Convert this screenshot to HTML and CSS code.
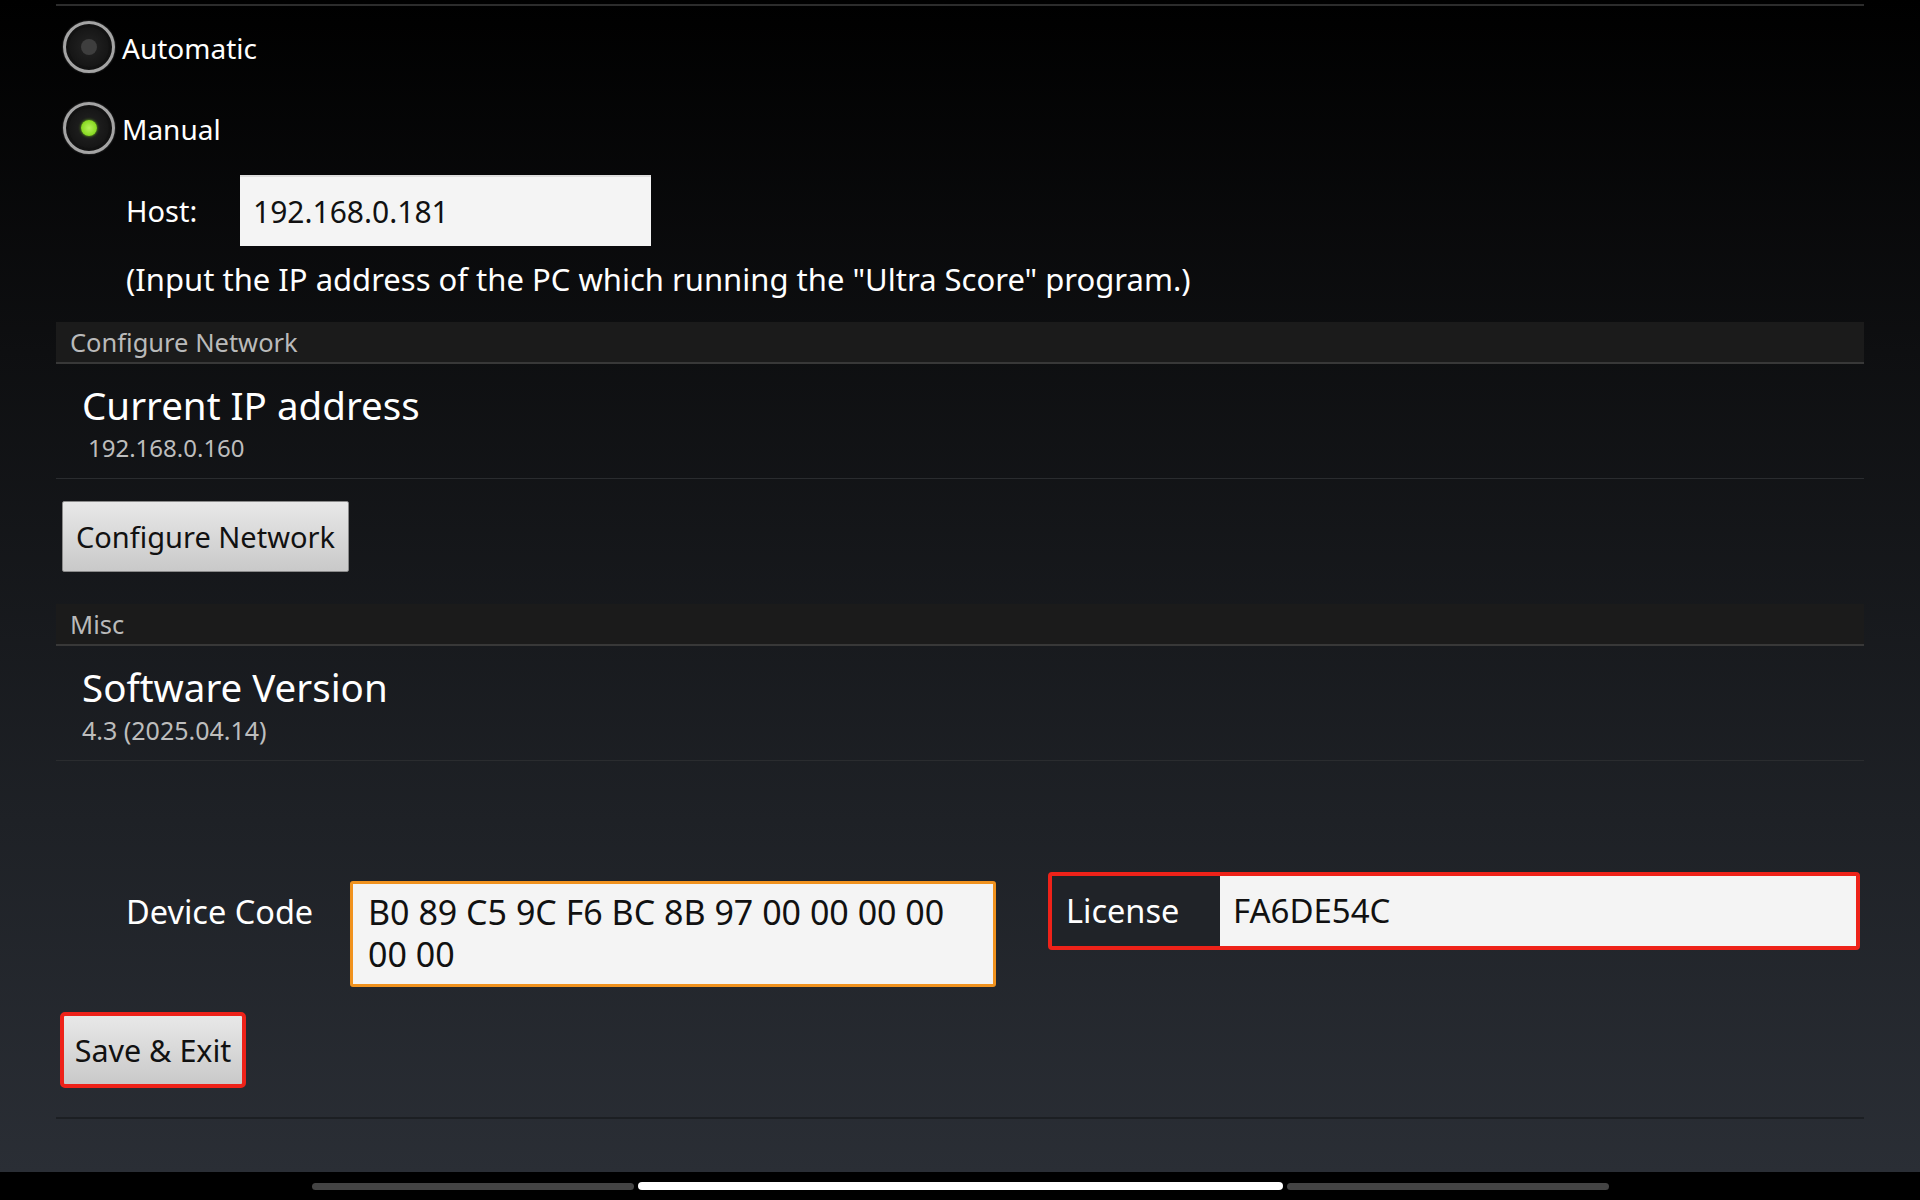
FILE: index.html
```html
<!DOCTYPE html>
<html lang="en">
<head>
    <meta charset="UTF-8">
    <meta name="viewport" content="width=device-width, initial-scale=1.0">
    <title>Settings</title>
    <link rel="stylesheet" href="styles.css">
</head>
<body>
    <div class="screen">
        <div class="main">
            <div class="rule-top"></div>

            <div class="radio-group">
                <div class="radio-row">
                    <span class="radio"><span class="dot"></span></span>
                    <span class="radio-label">Automatic</span>
                </div>
                <div class="radio-row">
                    <span class="radio"><span class="dot on"></span></span>
                    <span class="radio-label">Manual</span>
                </div>
            </div>

            <div class="host-row">
                <span class="host-label">Host:</span>
                <div class="field host-field">192.168.0.181</div>
            </div>
            <p class="hint">(Input the IP address of the PC which running the "Ultra Score" program.)</p>

            <div class="section-head">Configure Network</div>
            <div class="item">
                <div class="item-title">Current IP address</div>
                <div class="item-sub ip">192.168.0.160</div>
            </div>
            <button class="btn btn-config">Configure Network</button>

            <div class="section-head misc">Misc</div>
            <div class="item">
                <div class="item-title">Software Version</div>
                <div class="item-sub version">4.3 (2025.04.14)</div>
            </div>

            <div class="code-row">
                <span class="code-label">Device Code</span>
                <div class="code-box">B0 89 C5 9C F6 BC 8B 97 00 00 00 00<br>00 00</div>
                <div class="license-box">
                    <span class="license-label">License</span>
                    <div class="license-field">FA6DE54C</div>
                </div>
            </div>

            <button class="btn btn-save">Save &amp; Exit</button>
            <div class="rule-bottom"></div>
        </div>

        <div class="navbar">
            <span class="pill"></span>
            <span class="pill active"></span>
            <span class="pill"></span>
        </div>
    </div>
</body>
</html>
```

FILE: styles.css
```css
*{
    padding: 0;
    margin: 0;
    box-sizing: border-box;
}

body{
    background-color: #000;
    font-family: "Noto Sans", Roboto, sans-serif;
    color: #fff;
}
.screen{
    width: 1920px;
    height: 1200px;
    display: flex;
    flex-direction: column;
}
.main{
    height: 1172px;
    padding: 0 56px;
    background: linear-gradient(#000 0%, #0e0f11 30%, #1e2126 70%, #2a2e35 100%);
}
.rule-top{
    margin-top: 4px;
    height: 2px;
    background-color: #2c2c2c;
}

/* radio buttons */
.radio-group{
    margin-top: 15px;
    display: flex;
    flex-direction: column;
    gap: 29px;
}
.radio-row{
    display: flex;
    align-items: center;
    height: 52px;
    padding-left: 7px;
}
.radio{
    width: 52px;
    height: 52px;
    border-radius: 50%;
    border: 3px solid #a4a4a4;
    background: radial-gradient(#242424 0%, #161616 60%, #0b0b0b 100%);
    box-shadow: inset 0 0 0 3px #121212, 0 0 2px #555;
    display: flex;
    justify-content: center;
    align-items: center;
}
.dot{
    width: 16px;
    height: 16px;
    border-radius: 50%;
    background-color: #3e3e3e;
}
.dot.on{
    background: radial-gradient(#b6f25a 0%, #86d81f 70%, #5fae12 100%);
    box-shadow: 0 0 3px #6fc41a;
}
.radio-label{
    margin-left: 7px;
    margin-top: 2px;
    font-size: 28px;
}

/* host */
.host-row{
    margin-top: 21px;
    display: flex;
    align-items: center;
    padding-left: 70px;
}
.host-label{
    width: 114px;
    font-size: 29px;
}
.field{
    background-color: #f4f4f4;
    color: #111;
    font-size: 30px;
}
.host-field{
    width: 411px;
    height: 71px;
    line-height: 69px;
    padding-left: 13px;
    border-top: 2px solid #dedede;
}
.hint{
    margin-top: 13px;
    padding-left: 70px;
    font-size: 31px;
    line-height: 40px;
}

/* sections */
.section-head{
    margin-top: 23px;
    height: 42px;
    line-height: 40px;
    padding-left: 14px;
    background-color: #1b1b1b;
    border-bottom: 2px solid #383838;
    color: #bababa;
    font-size: 25.5px;
}
.section-head.misc{
    margin-top: 32px;
}
.item{
    padding: 18px 0 15px 26px;
    border-bottom: 1px solid #2a2c2f;
}
.item-title{
    font-size: 38.5px;
    line-height: 46px;
}
.item-sub{
    margin-top: 5px;
    font-size: 24px;
    line-height: 30px;
    color: #bdbdbd;
}
.item-sub.ip{
    padding-left: 6px;
}
.item-sub.version{
    font-size: 25px;
}

.btn{
    display: block;
    font-family: "Noto Sans", Roboto, sans-serif;
    font-size: 29px;
    color: #111;
    background: linear-gradient(#e8e8e8, #c9c9c9);
    border: 1px solid #8a8a8a;
    border-radius: 2px;
    cursor: pointer;
}
.btn-config{
    margin: 22px 0 0 6px;
    width: 287px;
    height: 71px;
}

/* device code + license */
.code-row{
    margin-top: 111px;
    display: flex;
    align-items: flex-start;
}
.code-label{
    width: 294px;
    padding-left: 70px;
    margin-top: 19px;
    font-size: 32.5px;
    line-height: 42px;
}
.code-box{
    margin-top: 9px;
    width: 646px;
    height: 106px;
    padding: 7px 0 0 15px;
    background-color: #f4f4f4;
    border: 3px solid #f0921e;
    border-radius: 3px;
    color: #111;
    font-size: 34px;
    line-height: 42px;
}
.license-box{
    margin-left: 52px;
    width: 812px;
    height: 78px;
    display: flex;
    border: 4px solid #ee2219;
    border-radius: 4px;
}
.license-label{
    width: 168px;
    padding-left: 14px;
    font-size: 32.5px;
    line-height: 70px;
    background-color: #202328;
}
.license-field{
    flex: 1;
    padding-left: 13px;
    background-color: #f4f4f4;
    color: #111;
    font-size: 33px;
    line-height: 70px;
}

.btn-save{
    margin: 25px 0 0 4px;
    width: 186px;
    height: 76px;
    border: 4px solid #ee2219;
    border-radius: 5px;
    font-size: 30.5px;
}
.rule-bottom{
    margin-top: 29px;
    height: 2px;
    background-color: #1c1f23;
}

/* system nav bar */
.navbar{
    height: 28px;
    background-color: #000;
    display: flex;
    justify-content: center;
    align-items: center;
    gap: 4px;
}
.pill{
    width: 322px;
    height: 7px;
    border-radius: 4px;
    background-color: #444;
}
.pill.active{
    width: 645px;
    height: 8px;
    background-color: #fff;
}
```
